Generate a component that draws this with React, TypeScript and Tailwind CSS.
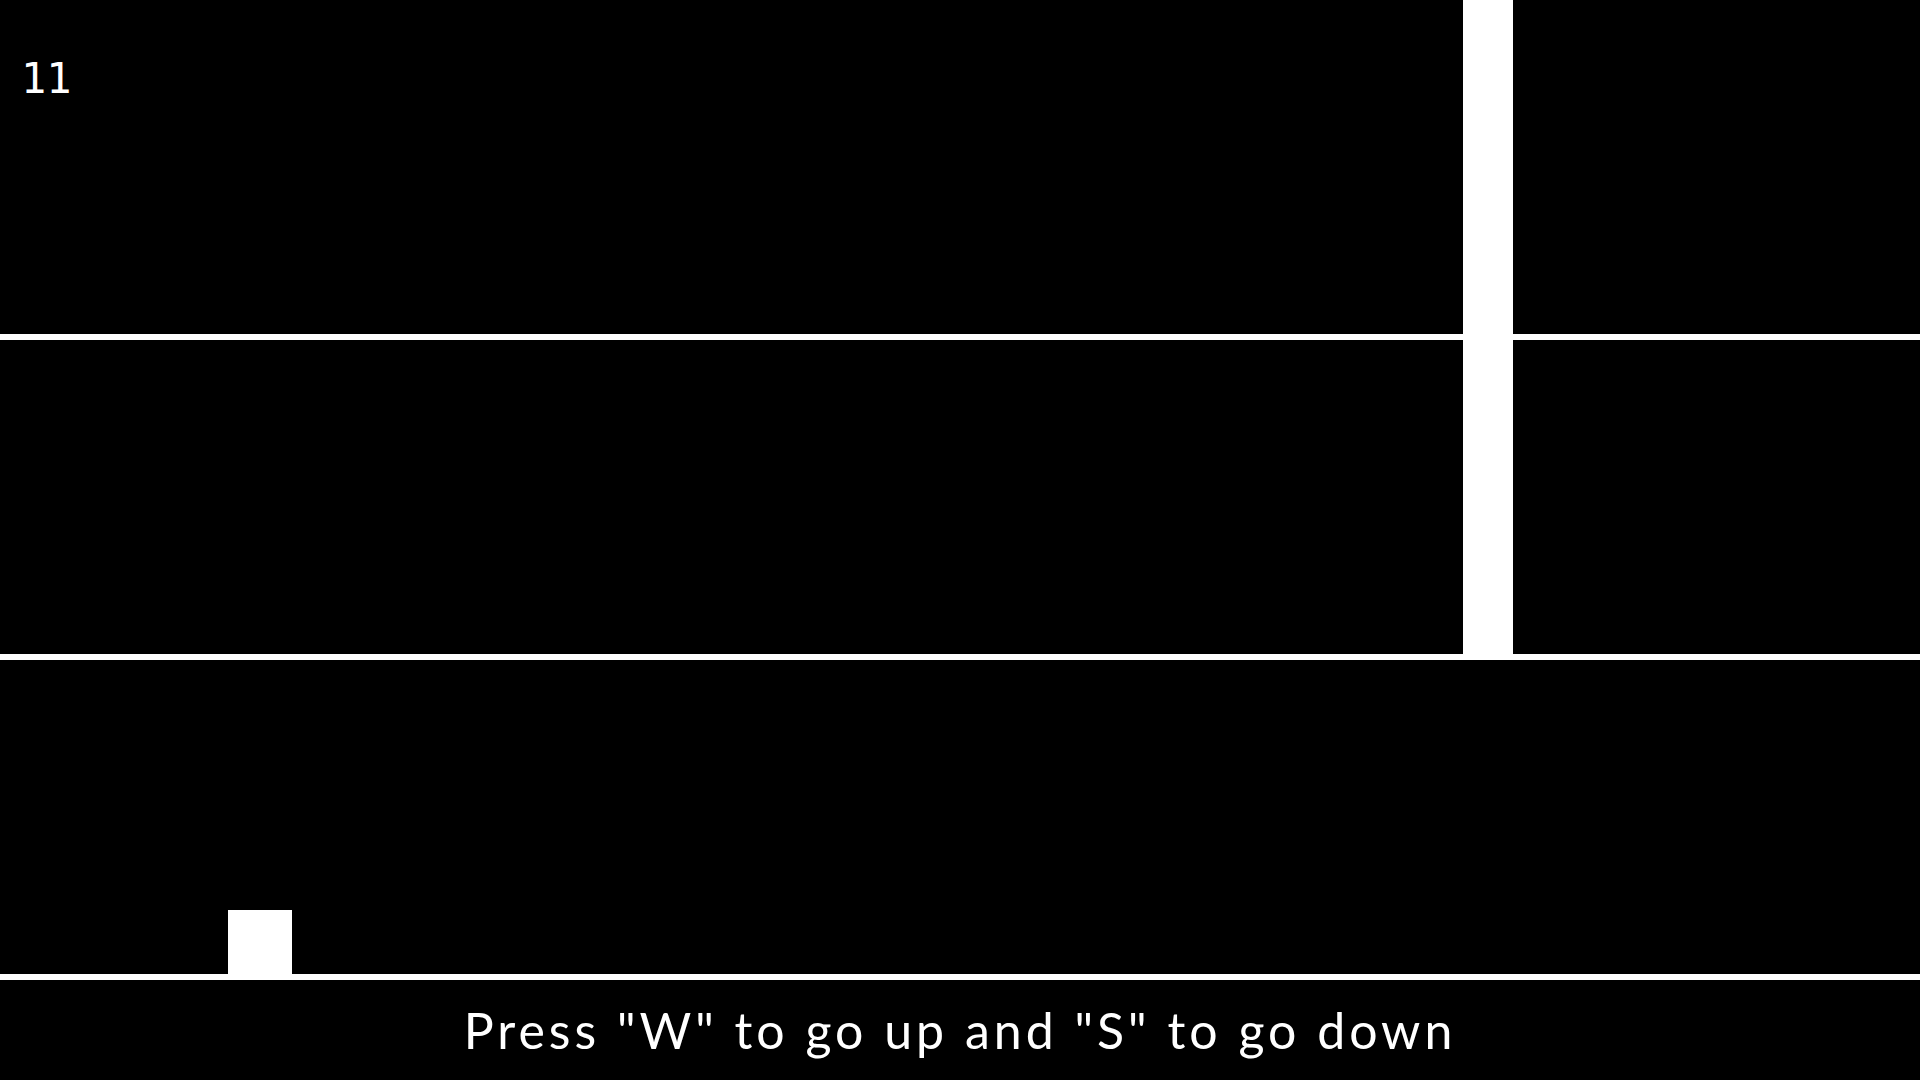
export default function App() {
    const score = 11;

    return (
        <div className="w-full h-screen bg-black flex flex-col overflow-hidden select-none">
            {/* Play field: three lanes split by white rails */}
            <div className="relative flex flex-col">
                <div className="h-[334px] relative">
                    <span className="absolute left-[21px] top-[58px] text-[42px] leading-none text-white font-['DejaVu_Sans_Mono',monospace]">
                        {score}
                    </span>
                </div>
                <div className="h-[6px] bg-white" />
                <div className="h-[314px]" />
                <div className="h-[6px] bg-white" />
                <div className="h-[314px] relative">
                    {/* Player */}
                    <div className="absolute left-[228px] bottom-0 w-[64px] h-[64px] bg-white" />
                </div>
                <div className="h-[6px] bg-white" />

                {/* Obstacle covering top two lanes */}
                <div className="absolute left-[1463px] top-0 w-[50px] h-[654px] bg-white" />
            </div>

            {/* Instructions */}
            <div className="h-[100px] flex items-center justify-center">
                <p className="text-white text-[50px] leading-none tracking-[4px] font-['Lato',sans-serif]">
                    Press "W" to go up and "S" to go down
                </p>
            </div>
        </div>
    );
}
